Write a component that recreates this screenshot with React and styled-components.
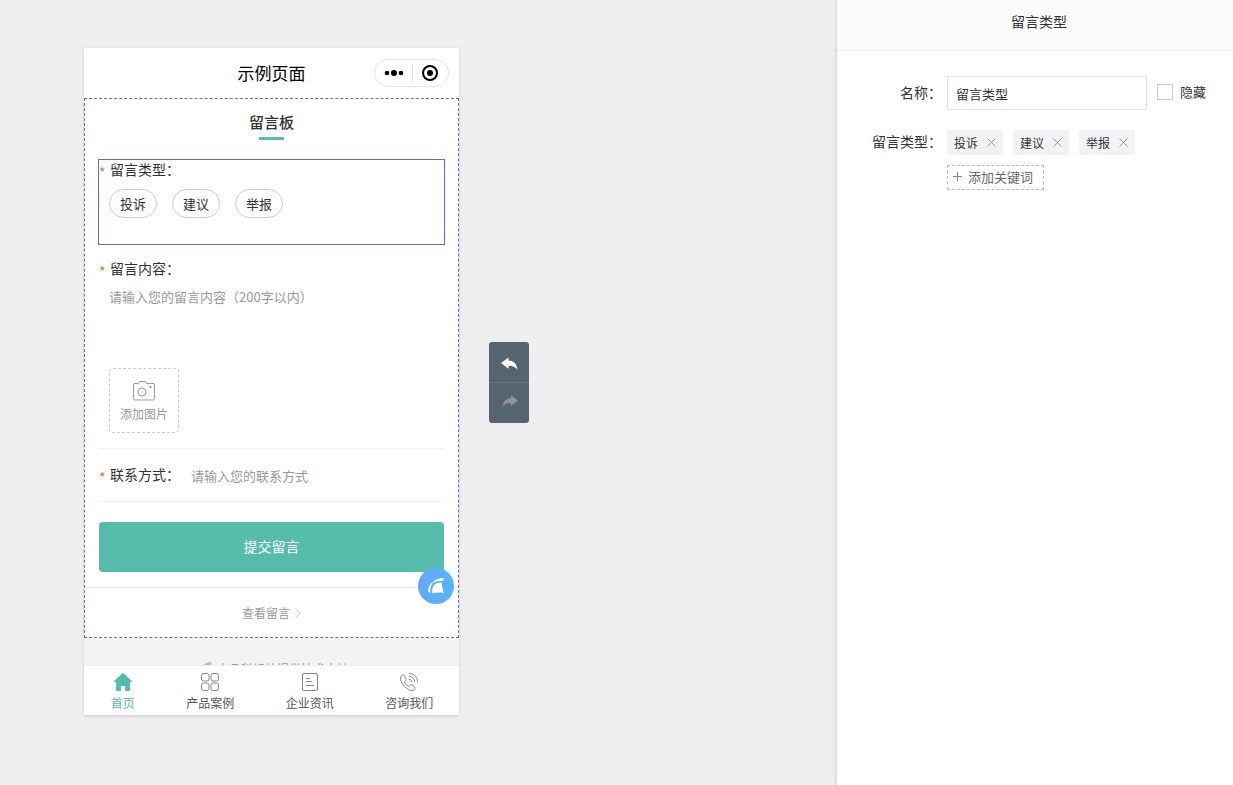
import React, { useState } from 'react';
import styled, { createGlobalStyle } from 'styled-components';

const GlobalStyle = createGlobalStyle`
  * {
    box-sizing: border-box;
  }

  body {
    margin: 0;
    background: #efefef;
    color: #333;
    font-family: 'Noto Sans CJK SC', sans-serif;
    font-size: 14px;
    line-height: 20px;
  }

  button, input, textarea {
    font-family: inherit;
    margin: 0;
  }

  button {
    cursor: pointer;
  }
`;

const HomeIcon = () => (
  <svg width="20" height="20" viewBox="0 0 20 20" fill="#56bcab">
    <path d="M10 .8 19 9.3q.4.7-.4.8H17v8q0 .9-.9.9h-4v-4.500q0-.6-.6-.6h-3q-.6 0-.6.6V19H4q-.9 0-.9-.9v-8H1.400Q.6 10 1 9.300Z" />
  </svg>
);

const GridIcon = () => (
  <svg width="20" height="20" viewBox="0 0 20 20" fill="none" stroke="#888" strokeWidth="1">
    <rect x="1.500" y="1.500" width="7.500" height="7.500" rx="2" />
    <rect x="11" y="1.500" width="7.500" height="7.500" rx="2" />
    <rect x="1.500" y="11" width="7.500" height="7.500" rx="2" />
    <rect x="11" y="11" width="7.500" height="7.500" rx="2" />
  </svg>
);

const NewsIcon = () => (
  <svg width="20" height="20" viewBox="0 0 20 20" fill="none" stroke="#888" strokeWidth="1">
    <rect x="2.500" y="1.500" width="15" height="17" rx="1.500" />
    <path d="M6 6.500h4M6 9.500h6M6 13.500h8" />
  </svg>
);

const PhoneIcon = () => (
  <svg width="20" height="20" viewBox="0 0 20 20" fill="none" stroke="#888" strokeWidth="1" strokeLinecap="round" strokeLinejoin="round">
    <path d="M5 3.200c-.8-.7-1.600-.5-2.300.2C1 5 1 7 2.200 9.600c1.700 3.500 4.200 6.200 7.500 8.200 2.300 1.300 4.600 1.400 6-.5.700-.9.600-1.600-.1-2.300l-2.300-1.900c-.8-.6-1.500-.5-2.100.2l-.7.8c-.4.400-.8.400-1.300.1-1.500-1-2.700-2.300-3.500-3.700-.3-.5-.2-.9.200-1.200l.8-.7c.7-.6.800-1.300.2-2Z" />
    <path d="M10.500 1.500c4.500 0 8 3.500 8 8M10.300 4.300c3 0 5.300 2.300 5.300 5.300M10.200 7.200c1.500 0 2.500 1 2.500 2.500" />
  </svg>
);

const CameraIcon = () => (
  <svg width="24" height="22" viewBox="0 0 24 22" fill="none" stroke="#999" strokeWidth="1">
    <path d="M6.500 3.500H3q-1.500 0-1.500 1.500v13.500q0 1.500 1.500 1.500h18q1.500 0 1.500-1.500V5q0-1.500-1.500-1.500h-6.500" />
    <path d="M6.500 3.500 7.500 1.500h6l1 2" />
    <circle cx="10" cy="12" r="4" />
    <path d="M17.500 7h2" strokeWidth="2" />
  </svg>
);

const UndoIcon = () => (
  <svg width="17" height="14" viewBox="0 0 18 14" fill="currentColor">
    <path d="M0 6 8 0v3.300c5.500.4 8.800 3.700 9.300 9.700-2-3-4.700-4.200-9.300-4.200V12Z" />
  </svg>
);

const RedoIcon = () => (
  <svg width="16" height="13" viewBox="0 0 18 14" fill="currentColor">
    <path d="M18 6 10 0v3.300C4.500 3.700 1.200 7 .7 13c2-3 4.700-4.200 9.300-4.200V12Z" />
  </svg>
);

const CloseIcon = () => (
  <svg width="9" height="9" viewBox="0 0 9 9" stroke="#999" strokeWidth="1">
    <path d="m.5.5 8 8M8.500.5l-8 8" />
  </svg>
);

const tabs = [
  { name: '首页', icon: <HomeIcon />, active: true },
  { name: '产品案例', icon: <GridIcon /> },
  { name: '企业资讯', icon: <NewsIcon /> },
  { name: '咨询我们', icon: <PhoneIcon /> },
];

const App = () => {
  const [fieldName, setFieldName] = useState('留言类型');
  const [hidden, setHidden] = useState(false);
  const [keywords, setKeywords] = useState(['投诉', '建议', '举报']);

  const removeKeyword = (word) => {
    setKeywords(keywords.filter((k) => k !== word));
  };

  return (
    <Page>
      <GlobalStyle />
      <Canvas>
        <Phone>
          <PhoneHeader>
            <span />
            <PageTitle>示例页面</PageTitle>
            <Capsule>
              <svg width="20" height="8" viewBox="0 0 20 8">
                <circle cx="3" cy="4" r="2.300" />
                <circle cx="10" cy="4" r="3" />
                <circle cx="17" cy="4" r="2.300" />
              </svg>
              <CapsuleLine />
              <svg width="18" height="18" viewBox="0 0 18 18">
                <circle cx="9" cy="9" r="7" fill="none" stroke="#000" strokeWidth="2" />
                <circle cx="9" cy="9" r="3" />
              </svg>
            </Capsule>
          </PhoneHeader>

          <Board>
            <BoardTitle>留言板</BoardTitle>

            <TypeField>
              <Label as="div"><Star>*</Star>{fieldName}：</Label>
              <Pills>
                {keywords.map((word) => (
                  <Pill type="button" key={word}>{word}</Pill>
                ))}
              </Pills>
            </TypeField>

            <ContentField>
              <Label htmlFor="content"><Star>*</Star>留言内容：</Label>
              <TextArea id="content" placeholder="请输入您的留言内容（200字以内）" />
              <AddImage type="button">
                <CameraIcon />
                添加图片
              </AddImage>
            </ContentField>

            <ContactField>
              <Label htmlFor="contact"><Star>*</Star>联系方式：</Label>
              <ContactInput id="contact" type="text" placeholder="请输入您的联系方式" />
            </ContactField>

            <Submit type="button">提交留言</Submit>

            <ViewMore>
              <a href="#messages">
                查看留言
                <svg width="6" height="10" viewBox="0 0 6 10" fill="none" stroke="#ccc">
                  <path d="m.5.5 4.500 4.500L.5 9.500" />
                </svg>
              </a>
            </ViewMore>

            <FloatButton type="button" aria-label="logo">
              <svg width="18" height="18" viewBox="0 0 18 18" fill="#fff">
                <path d="M16.500 1C11 1 6.500 3.300 5 6.500 7.500 4.500 11.500 3.500 16.500 3.800Z" />
                <path d="M5.500 5C2.500 7.500 1 11 1 14.500L3.500 16C3 12 3.500 9 5.200 7Z" />
                <path d="M15 5.500c-4 0-6.500 1-8 2.500-1.800 2.500-2 5-1.500 8.500 3.500-1 7-1.200 11.500-.5-1.500-3.500-2.200-7-2-10.500Z" />
              </svg>
            </FloatButton>
          </Board>

          <Support>
            <svg width="10" height="10" viewBox="0 0 10 10" fill="#bbb">
              <path d="M9.500 1C5 1 1.500 2.500 0 6l9 3Z" />
            </svg>
            由凡科轻站提供技术支持
          </Support>

          <TabBar>
            {tabs.map((tab) => (
              <Tab href="#tab" key={tab.name} $active={tab.active}>
                {tab.icon}
                {tab.name}
              </Tab>
            ))}
          </TabBar>
        </Phone>

        <History>
          <HistoryButton type="button" aria-label="撤销"><UndoIcon /></HistoryButton>
          <HistoryButton type="button" aria-label="重做" disabled><RedoIcon /></HistoryButton>
        </History>
      </Canvas>

      <Panel>
        <PanelHeader>留言类型</PanelHeader>
        <PanelBody>
          <Row>
            <RowLabel htmlFor="name">名称：</RowLabel>
            <NameInput
              id="name"
              type="text"
              value={fieldName}
              onChange={(e) => setFieldName(e.target.value)}
            />
            <CheckLabel>
              <Checkbox
                type="checkbox"
                checked={hidden}
                onChange={(e) => setHidden(e.target.checked)}
              />
              隐藏
            </CheckLabel>
          </Row>
          <Row $top>
            <RowLabel as="span">留言类型：</RowLabel>
            <Tags>
              {keywords.map((word) => (
                <Tag key={word}>
                  {word}
                  <TagClose type="button" aria-label="删除" onClick={() => removeKeyword(word)}>
                    <CloseIcon />
                  </TagClose>
                </Tag>
              ))}
              <AddTag type="button">
                <svg width="9" height="9" viewBox="0 0 9 9" stroke="#888">
                  <path d="M0 4.500h9M4.500 0v9" />
                </svg>
                添加关键词
              </AddTag>
            </Tags>
          </Row>
        </PanelBody>
      </Panel>
    </Page>
  );
};

const Page = styled.div`
  display: flex;
  min-height: 100vh;
`;

const Canvas = styled.main`
  flex: 1;
  display: flex;
  align-items: flex-start;
  gap: 30px;
  padding: 48px 84px;
`;

const Phone = styled.section`
  flex: 0 1 375px;
  background: #fff;
  box-shadow: 0 1px 3px rgba(0, 0, 0, 0.15);
`;

const PhoneHeader = styled.header`
  display: grid;
  grid-template-columns: 1fr auto 1fr;
  align-items: center;
  height: 50px;
  padding: 0 10px;
`;

const PageTitle = styled.h1`
  margin: 0;
  font-size: 17px;
  font-weight: 400;
  color: #000;
`;

const Capsule = styled.div`
  justify-self: end;
  display: flex;
  align-items: center;
  gap: 8px;
  height: 28px;
  padding: 0 9px;
  border: 1px solid #e5e5e5;
  border-radius: 14px;
`;

const CapsuleLine = styled.span`
  width: 1px;
  height: 18px;
  background: #e5e5e5;
`;

const Board = styled.div`
  position: relative;
  padding: 0 13px;
  border: 1px dashed #5f6fc0;
`;

const BoardTitle = styled.h2`
  margin: 0;
  padding: 13px 0 19px;
  text-align: center;
  font-size: 15px;
  font-weight: 500;

  &::after {
    content: '';
    display: block;
    width: 25px;
    height: 3px;
    margin: 5px auto 0;
    background: #56bcab;
  }
`;

const TypeField = styled.div`
  padding-bottom: 26px;
  border: 1px solid #5f6fc0;
`;

const Label = styled.label`
  display: flex;
  flex: none;
  height: 20px;
  line-height: 18px;
  white-space: nowrap;
`;

const Star = styled.span`
  width: 11px;
  line-height: 24px;
  color: #e0702a;
`;

const Pills = styled.div`
  display: flex;
  gap: 15px;
  padding: 9px 0 0 10px;
`;

const Pill = styled.button`
  height: 29px;
  padding: 0 10px;
  border: 1px solid #ccc;
  border-radius: 15px;
  background: #fff;
  color: #333;
  font-size: 13px;
`;

const ContentField = styled.div`
  margin: 0 1px;
  padding: 14px 0 15px;
  border-bottom: 1px solid #f0f0f0;
`;

const TextArea = styled.textarea`
  display: block;
  width: 100%;
  height: 81px;
  margin-bottom: 8px;
  padding: 8px 10px;
  border: none;
  outline: none;
  resize: none;
  font-size: 13px;
  line-height: 20px;

  &::placeholder {
    color: #999;
  }
`;

const AddImage = styled.button`
  display: flex;
  flex-direction: column;
  align-items: center;
  gap: 2px;
  width: 70px;
  height: 65px;
  margin-left: 10px;
  padding: 11px 0 0;
  border: 1px dashed #ccc;
  border-radius: 4px;
  background: #fff;
  color: #999;
  font-size: 12px;
  line-height: 20px;

  svg {
    flex: none;
  }
`;

const ContactField = styled.div`
  display: flex;
  align-items: center;
  gap: 11px;
  height: 53px;
  margin: 0 1px;
  border-bottom: 1px solid #f0f0f0;
`;

const ContactInput = styled.input`
  flex: 1;
  min-width: 0;
  padding: 0;
  border: none;
  outline: none;
  font-size: 13px;

  &::placeholder {
    color: #999;
  }
`;

const Submit = styled.button`
  display: block;
  width: calc(100% - 2px);
  height: 50px;
  margin: 20px 1px 15px;
  padding: 0 0 2px;
  border: none;
  border-radius: 4px;
  background: #56bcab;
  color: #fff;
  font-size: 14px;
`;

const ViewMore = styled.div`
  display: flex;
  justify-content: center;
  margin: 0 -13px;
  padding: 15px 0 14px;
  border-top: 1px solid #e8e8e8;

  a {
    display: flex;
    align-items: center;
    gap: 5px;
    color: #999;
    font-size: 12px;
    text-decoration: none;
  }
`;

const FloatButton = styled.button`
  position: absolute;
  right: 4px;
  bottom: 33px;
  display: flex;
  align-items: center;
  justify-content: center;
  width: 36px;
  height: 36px;
  padding: 0;
  border: none;
  border-radius: 50%;
  background: linear-gradient(90deg, #64a8fb, #56b4ff);
`;

const Support = styled.div`
  display: flex;
  justify-content: center;
  align-items: flex-start;
  gap: 5px;
  height: 27px;
  padding: 21px 0 0 8px;
  overflow: hidden;
  background: #f3f3f3;
  color: #999;
  font-size: 12px;

  svg {
    flex: none;
    margin-top: 2px;
  }
`;

const TabBar = styled.nav`
  display: flex;
  justify-content: space-around;
  padding: 6px 0 2px 1px;
  border-top: 1px solid #eee;
`;

const Tab = styled.a`
  display: flex;
  flex-direction: column;
  align-items: center;
  gap: 1px;
  color: ${(props) => (props.$active ? '#56bcab' : '#555')};
  font-size: 12px;
  text-decoration: none;
`;

const History = styled.div`
  display: flex;
  flex-direction: column;
  margin-top: 294px;
  border-radius: 3px;
  overflow: hidden;
  background: #54656f;
`;

const HistoryButton = styled.button`
  display: flex;
  align-items: center;
  justify-content: center;
  width: 40px;
  height: 40px;
  padding: 4px 0 0;
  border: none;
  background: none;
  color: #fff;

  & + & {
    height: 41px;
    padding: 0 0 3px 2px;
    border-top: 1px solid #66757e;
    color: #958f9f;
  }
`;

const Panel = styled.aside`
  flex: 0 0 396px;
  background: #fff;
  box-shadow: 0 0 4px rgba(0, 0, 0, 0.2);
`;

const PanelHeader = styled.header`
  height: 51px;
  padding: 11px 0 0 8px;
  border-bottom: 1px solid #eee;
  background: #fbfbfb;
  text-align: center;
`;

const PanelBody = styled.div`
  display: flex;
  flex-direction: column;
  gap: 20px;
  padding-top: 25px;
`;

const Row = styled.div`
  display: flex;
  align-items: ${(props) => (props.$top ? 'flex-start' : 'center')};
`;

const RowLabel = styled.label`
  width: 105px;
  margin-right: 5px;
  padding-bottom: 2px;
  line-height: 22px;
  text-align: right;
`;

const NameInput = styled.input`
  width: 200px;
  height: 34px;
  padding: 0 8px;
  border: 1px solid #e3e3e8;
  outline: none;
  color: #333;
  font-size: 13px;
`;

const CheckLabel = styled.label`
  display: flex;
  align-items: center;
  gap: 7px;
  margin-left: 10px;
  padding-bottom: 2px;
  font-size: 13px;
`;

const Checkbox = styled.input`
  appearance: none;
  width: 16px;
  height: 16px;
  border: 1px solid #ccc;
  background: #fff;

  &:checked {
    background: #5874d8;
  }
`;

const Tags = styled.div`
  flex: 1;
  display: flex;
  flex-wrap: wrap;
  gap: 10px;
  padding-right: 80px;
`;

const Tag = styled.span`
  display: flex;
  align-items: center;
  gap: 9px;
  height: 25px;
  padding: 0 7px;
  background: #f3f3f6;
  font-size: 12px;
`;

const TagClose = styled.button`
  display: flex;
  padding: 0;
  border: none;
  background: none;
`;

const AddTag = styled.button`
  display: flex;
  align-items: center;
  gap: 6px;
  height: 25px;
  padding: 0 10px 2px 5px;
  border: 1px dashed #bbb;
  background: #fff;
  color: #666;
  font-size: 13px;
`;

export default App;
